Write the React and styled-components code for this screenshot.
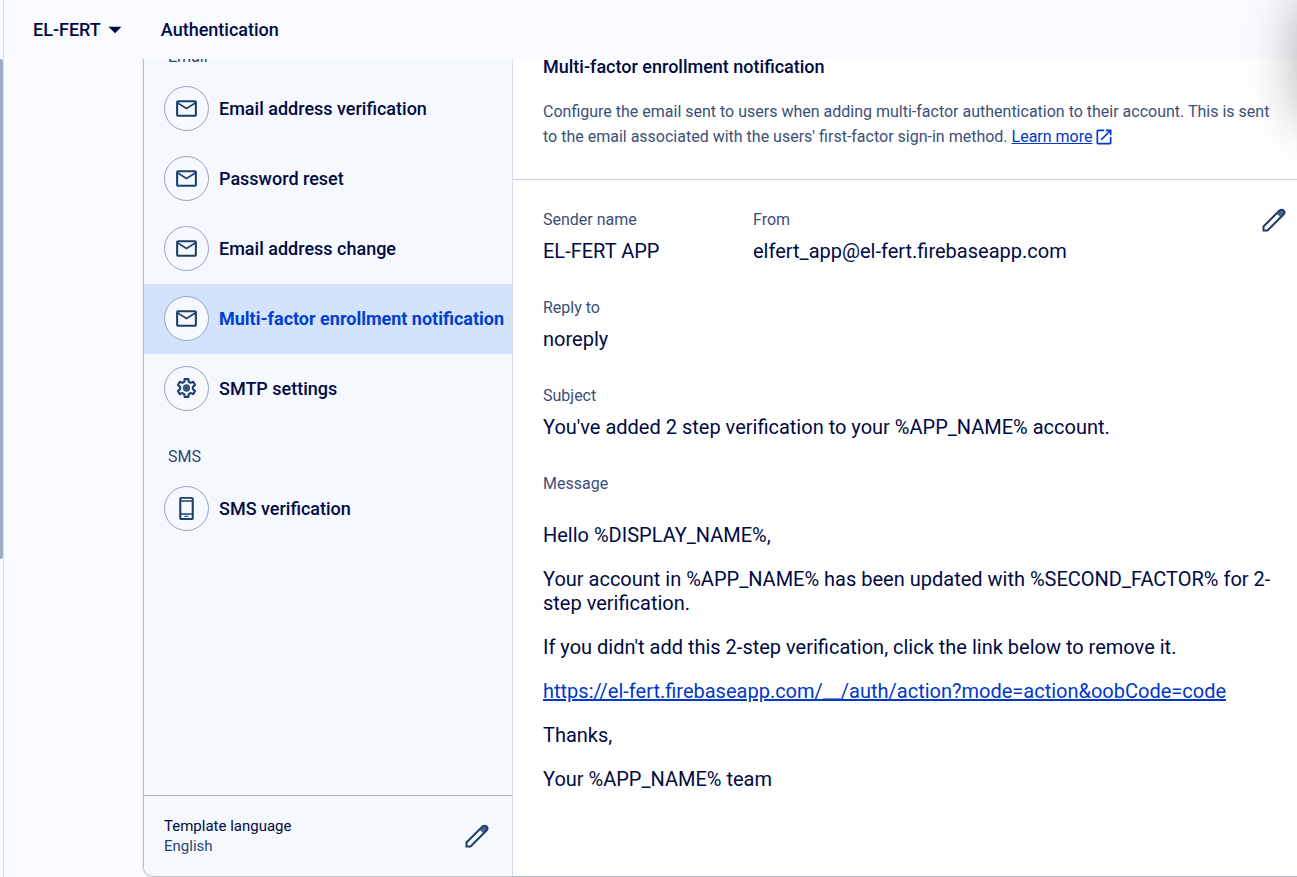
import React from "react";
import styled, { createGlobalStyle } from "styled-components";

const GlobalStyle = createGlobalStyle`
  *, *::before, *::after { box-sizing: border-box; }
  body {
    margin: 0;
    background: #fafbff;
    color: #000a42;
    font-family: Roboto, "Liberation Sans", sans-serif;
    font-size: 16px;
  }
  h1, h2, p, dl, dt, dd, ul { margin: 0; padding: 0; }
  ul { list-style: none; }
  button { font: inherit; color: inherit; background: none; border: 0; padding: 0; cursor: pointer; }
  a { color: #0038c8; }
  svg { display: block; fill: currentColor; }
`;

const Page = styled.div`
  position: relative;
  display: flex;
  min-height: 100vh;
  overflow: hidden;
`;

const Rail = styled.div`
  flex: none;
  width: 4px;
  padding-top: 59px;
  background: #f5f8ff;
  border-right: 1px solid #d9e0ee;
`;

const RailThumb = styled.div`
  width: 3px;
  height: 500px;
  border-radius: 0 4px 4px 0;
  background: #a0abc5;
`;

const Column = styled.div`
  flex: 1;
  min-width: 0;
  display: flex;
  flex-direction: column;
`;

const TopBar = styled.header`
  position: sticky;
  top: 0;
  z-index: 1;
  flex: none;
  display: flex;
  align-items: center;
  gap: 33px;
  height: 59px;
  padding-left: 29px;
  background: #fafbff;
  font-size: 18px;
  font-weight: 500;
  line-height: 24px;
`;

const ProjectButton = styled.button`
  display: flex;
  align-items: center;
  gap: 1px;
`;

const PageTitle = styled.h1`
  font-size: inherit;
  font-weight: inherit;
`;

const Card = styled.main`
  flex: 1;
  display: flex;
  margin-left: 139px;
  border: 1px solid #bcbfc8;
  border-width: 0 0 1px 1px;
  border-bottom-left-radius: 10px;
  background: #fff;
  box-shadow: -1px 0 2px rgba(0, 0, 40, 0.08);
`;

const SidePanel = styled.aside`
  flex: none;
  width: 369px;
  display: flex;
  flex-direction: column;
  border-right: 1px solid #d3dfeb;
  border-bottom-left-radius: 9px;
  background: #f5f9fe;
`;

const TemplateNav = styled.nav`
  flex: 1;
  margin-top: -35px;
`;

const GroupLabel = styled.h2`
  height: 50px;
  padding: 21px 24px 5px;
  color: #2b4575;
  font-size: 16px;
  font-weight: 400;
  line-height: 24px;
`;

const TemplateItem = styled.button`
  display: flex;
  align-items: center;
  gap: 10px;
  width: 100%;
  height: 70px;
  padding: 0 0 2px 20px;
  background: ${(p) => (p.$selected ? "#d3e3fd" : "transparent")};
  color: ${(p) => (p.$selected ? "#0040d0" : "inherit")};
  font-size: 18px;
  font-weight: ${(p) => (p.$selected ? 700 : 500)};
  white-space: nowrap;
`;

const IconCircle = styled.span`
  flex: none;
  display: grid;
  place-items: center;
  width: 45px;
  height: 45px;
  border: 1px solid #99a3bd;
  border-radius: 50%;
  background: #f6f9ff;
  color: #1f3f6b;
`;

const LanguageBar = styled.footer`
  display: flex;
  align-items: center;
  justify-content: space-between;
  height: 81px;
  padding: 0 20px;
  border-top: 1px solid #a3b3c9;
  font-size: 15px;
  line-height: 20px;
`;

const LanguageValue = styled.p`
  color: #2b4575;
`;

const EditButton = styled.button`
  flex: none;
  display: grid;
  place-items: center;
  width: 30px;
  height: 30px;
  color: #1f3f6b;
`;

const Detail = styled.section`
  flex: 1;
  min-width: 0;
`;

const Intro = styled.div`
  padding: 0 10px 30px 30px;
  border-bottom: 1px solid #cfd1d9;
`;

const IntroTitle = styled.h2`
  margin-top: -4px;
  font-size: 18px;
  font-weight: 500;
  line-height: 24px;
`;

const IntroText = styled.p`
  margin-top: 20px;
  color: #3b4f78;
  font-size: 16px;
  line-height: 25px;
`;

const LearnMore = styled.a`
  svg {
    display: inline-block;
    margin-left: 2px;
    vertical-align: -5px;
  }
`;

const Template = styled.div`
  display: flex;
  align-items: flex-start;
  padding: 25px 8px 20px 30px;
`;

const Fields = styled.dl`
  flex: 1;
  min-width: 0;
  display: flex;
  flex-direction: column;
  gap: 24px;
  padding-top: 3px;
`;

const FieldRow = styled.div`
  display: flex;
`;

const Field = styled.div`
  min-width: 210px;
`;

const FieldName = styled.dt`
  color: #3b4f78;
  font-size: 16px;
  line-height: 24px;
`;

const FieldValue = styled.dd`
  padding: 7px 0 9px;
  font-size: 20px;
  line-height: 24px;
`;

const Message = styled.dd`
  display: flex;
  flex-direction: column;
  gap: 20px;
  margin-top: 27px;
  margin-right: -20px;
  font-size: 20px;
  line-height: 24px;
`;

const EdgeShadow = styled.div`
  position: absolute;
  z-index: 2;
  top: 0;
  left: 100%;
  width: 100px;
  height: 120px;
  box-shadow: 0 0 54px rgba(0, 0, 0, 0.3);
  pointer-events: none;
`;

const MailIcon = () => (
  <svg width="25" height="25" viewBox="0 0 24 24" aria-hidden="true">
    <path d="M22 6c0-1.100-.9-2-2-2H4c-1.100 0-2 .9-2 2v12c0 1.100.9 2 2 2h16c1.100 0 2-.9 2-2V6zm-2 0-8 5-8-5h16zm0 12H4V8l8 5 8-5v10z" />
  </svg>
);

const GearIcon = () => (
  <svg width="25" height="25" viewBox="0 0 24 24" aria-hidden="true">
    <path
      d="M10.200 3h3.600l.4 2.600 1.700 1 2.500-1 1.800 3.100-2.100 1.700v2.200l2.100 1.700-1.800 3.100-2.500-1-1.700 1-.4 2.600h-3.600l-.4-2.600-1.700-1-2.500 1-1.800-3.100 2.100-1.700v-2.200L3.800 8.700l1.800-3.100 2.500 1 1.700-1z"
      fill="none"
      stroke="currentColor"
      strokeWidth="2"
      strokeLinejoin="round"
    />
    <circle cx="12" cy="11.500" r="3.500" opacity=".9" />
  </svg>
);

const PhoneIcon = () => (
  <svg width="25" height="25" viewBox="0 0 24 24" aria-hidden="true">
    <path
      fillRule="evenodd"
      d="M17 1H7c-1.100 0-2 .9-2 2v18c0 1.100.9 2 2 2h10c1.100 0 2-.9 2-2V3c0-1.100-.9-2-2-2zM7 2.700h10v1.300H7zM7 5.500h10v11H7zM7 18h10v3H7zM10 19h4v1h-4z"
    />
  </svg>
);

const PencilIcon = () => (
  <svg width="30" height="30" viewBox="0 0 30 30" aria-hidden="true">
    <path
      d="M4.500 25.500v-4L20.500 5.500a2.600 2.600 0 0 1 4 4L8.500 25.500z"
      fill="none"
      stroke="currentColor"
      strokeWidth="2"
    />
    <path d="M17.500 8.500l3-3a2.600 2.600 0 0 1 4 4l-3 3z" opacity=".8" />
  </svg>
);

const OpenIcon = () => (
  <svg width="20" height="20" viewBox="0 0 24 24" aria-hidden="true">
    <path d="M19 19H5V5h7V3H5c-1.110 0-2 .9-2 2v14c0 1.100.89 2 2 2h14c1.100 0 2-.9 2-2v-7h-2v7zM14 3v2h3.590l-9.830 9.830 1.410 1.410L19 6.410V10h2V3h-7z" />
  </svg>
);

const emailTemplates = [
  { label: "Email address verification", Icon: MailIcon },
  { label: "Password reset", Icon: MailIcon },
  { label: "Email address change", Icon: MailIcon },
  { label: "Multi-factor enrollment notification", Icon: MailIcon, selected: true },
  { label: "SMTP settings", Icon: GearIcon },
];

const smsTemplates = [{ label: "SMS verification", Icon: PhoneIcon }];

const TemplateList = ({ items }) => (
  <ul>
    {items.map(({ label, Icon, selected }) => (
      <li key={label}>
        <TemplateItem type="button" $selected={selected} aria-current={selected}>
          <IconCircle>
            <Icon />
          </IconCircle>
          {label}
        </TemplateItem>
      </li>
    ))}
  </ul>
);

export default function App() {
  return (
    <Page>
      <GlobalStyle />
      <Rail>
        <RailThumb />
      </Rail>
      <Column>
        <TopBar>
          <ProjectButton type="button">
            EL-FERT
            <svg width="26" height="26" viewBox="0 0 24 24" aria-hidden="true">
              <path d="M6 9h12l-6 6z" />
            </svg>
          </ProjectButton>
          <PageTitle>Authentication</PageTitle>
        </TopBar>
        <Card>
          <SidePanel>
            <TemplateNav aria-label="Templates">
              <GroupLabel>Email</GroupLabel>
              <TemplateList items={emailTemplates} />
              <GroupLabel>SMS</GroupLabel>
              <TemplateList items={smsTemplates} />
            </TemplateNav>
            <LanguageBar>
              <div>
                <p>Template language</p>
                <LanguageValue>English</LanguageValue>
              </div>
              <EditButton type="button" aria-label="Edit template language">
                <PencilIcon />
              </EditButton>
            </LanguageBar>
          </SidePanel>
          <Detail>
            <Intro>
              <IntroTitle>Multi-factor enrollment notification</IntroTitle>
              <IntroText>
                Configure the email sent to users when adding multi-factor authentication to their
                account. This is sent to the email associated with the users' first-factor sign-in
                method.{" "}
                <LearnMore href="#learn-more">
                  Learn more
                  <OpenIcon />
                </LearnMore>
              </IntroText>
            </Intro>
            <Template>
              <Fields>
                <FieldRow>
                  <Field>
                    <FieldName>Sender name</FieldName>
                    <FieldValue>EL-FERT APP</FieldValue>
                  </Field>
                  <Field>
                    <FieldName>From</FieldName>
                    <FieldValue>elfert_app@el-fert.firebaseapp.com</FieldValue>
                  </Field>
                </FieldRow>
                <Field>
                  <FieldName>Reply to</FieldName>
                  <FieldValue>noreply</FieldValue>
                </Field>
                <Field>
                  <FieldName>Subject</FieldName>
                  <FieldValue>You've added 2 step verification to your %APP_NAME% account.</FieldValue>
                </Field>
                <Field>
                  <FieldName>Message</FieldName>
                  <Message>
                    <p>Hello %DISPLAY_NAME%,</p>
                    <p>
                      Your account in %APP_NAME% has been updated with %SECOND_FACTOR% for 2-step
                      verification.
                    </p>
                    <p>
                      If you didn't add this 2-step verification, click the link below to remove it.
                    </p>
                    <p>
                      <a href="#action">
                        https://el-fert.firebaseapp.com/__/auth/action?mode=action&amp;oobCode=code
                      </a>
                    </p>
                    <p>Thanks,</p>
                    <p>Your %APP_NAME% team</p>
                  </Message>
                </Field>
              </Fields>
              <EditButton type="button" aria-label="Edit template">
                <PencilIcon />
              </EditButton>
            </Template>
          </Detail>
        </Card>
      </Column>
      <EdgeShadow />
    </Page>
  );
}
